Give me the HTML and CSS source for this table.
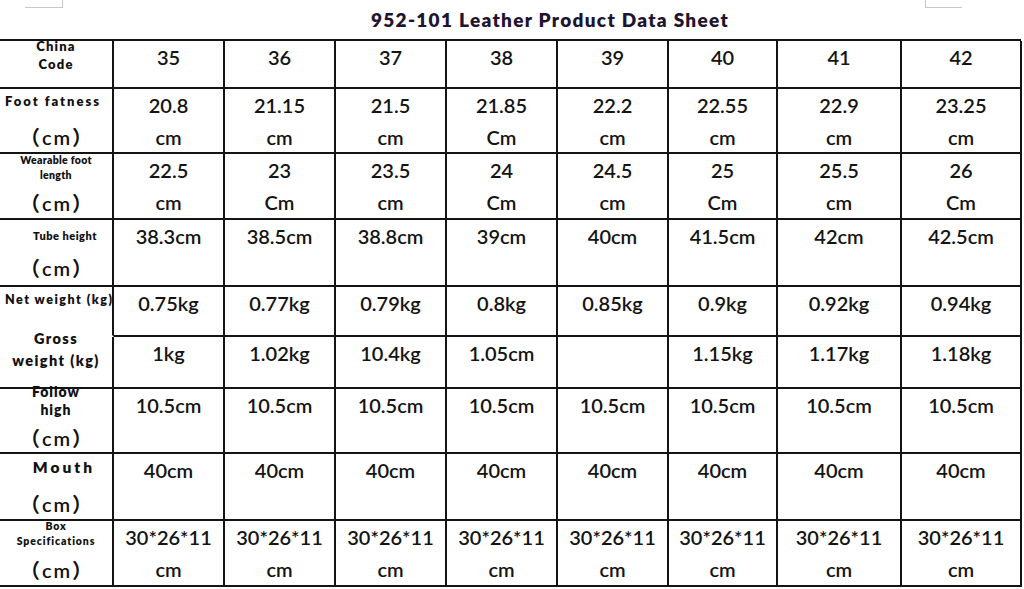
FILE: index.html
```html
<!DOCTYPE html>
<html lang="en">
<head>
<meta charset="utf-8">
<title>952-101 Leather Product Data Sheet</title>
<link rel="stylesheet" href="styles.css">
</head>
<body>
<div class="page">
  <span class="mark mark-left"></span>
  <span class="mark mark-right"></span>
  <h1 class="title">952-101 Leather Product Data Sheet</h1>
  <div class="sheet">
    <div class="c lab r1"><div class="l1">China</div><div>Code</div></div>
    <div class="c">35</div><div class="c">36</div><div class="c">37</div><div class="c">38</div><div class="c">39</div><div class="c">40</div><div class="c">41</div><div class="c">42</div>

    <div class="c lab r2"><div class="l1">Foot fatness</div><div class="cm">（cm）</div></div>
    <div class="c">20.8<br>cm</div><div class="c">21.15<br>cm</div><div class="c">21.5<br>cm</div><div class="c">21.85<br>Cm</div><div class="c">22.2<br>cm</div><div class="c">22.55<br>cm</div><div class="c">22.9<br>cm</div><div class="c">23.25<br>cm</div>

    <div class="c lab r3"><div class="l1">Wearable foot</div><div>length</div><div class="cm">（cm）</div></div>
    <div class="c">22.5<br>cm</div><div class="c">23<br>Cm</div><div class="c">23.5<br>cm</div><div class="c">24<br>Cm</div><div class="c">24.5<br>cm</div><div class="c">25<br>Cm</div><div class="c">25.5<br>cm</div><div class="c">26<br>Cm</div>

    <div class="c lab r4"><div class="l1">Tube height</div><div class="cm">（cm）</div></div>
    <div class="c">38.3cm</div><div class="c">38.5cm</div><div class="c">38.8cm</div><div class="c">39cm</div><div class="c">40cm</div><div class="c">41.5cm</div><div class="c">42cm</div><div class="c">42.5cm</div>

    <div class="c lab r5 open"><div class="l1">Net weight (kg)</div></div>
    <div class="c">0.75kg</div><div class="c">0.77kg</div><div class="c">0.79kg</div><div class="c">0.8kg</div><div class="c">0.85kg</div><div class="c">0.9kg</div><div class="c">0.92kg</div><div class="c">0.94kg</div>

    <div class="c lab r6"><div class="l1">Gross</div><div>weight (kg)</div></div>
    <div class="c">1kg</div><div class="c">1.02kg</div><div class="c">10.4kg</div><div class="c">1.05cm</div><div class="c"></div><div class="c">1.15kg</div><div class="c">1.17kg</div><div class="c">1.18kg</div>

    <div class="c lab r7"><div class="l1">Follow</div><div>high</div><div class="cm">（cm）</div></div>
    <div class="c">10.5cm</div><div class="c">10.5cm</div><div class="c">10.5cm</div><div class="c">10.5cm</div><div class="c">10.5cm</div><div class="c">10.5cm</div><div class="c">10.5cm</div><div class="c">10.5cm</div>

    <div class="c lab r8"><div class="l1">Mouth</div><div class="cm">（cm）</div></div>
    <div class="c">40cm</div><div class="c">40cm</div><div class="c">40cm</div><div class="c">40cm</div><div class="c">40cm</div><div class="c">40cm</div><div class="c">40cm</div><div class="c">40cm</div>

    <div class="c lab r9"><div class="l1">Box</div><div>Specifications</div><div class="cm">（cm）</div></div>
    <div class="c">30*26*11<br>cm</div><div class="c">30*26*11<br>cm</div><div class="c">30*26*11<br>cm</div><div class="c">30*26*11<br>cm</div><div class="c">30*26*11<br>cm</div><div class="c">30*26*11<br>cm</div><div class="c">30*26*11<br>cm</div><div class="c">30*26*11<br>cm</div>
  </div>
</div>
</body>
</html>
```

FILE: styles.css
```css
* { box-sizing: border-box; }
html, body { margin: 0; padding: 0; background: #fff; }
body {
  font-family: Lato, "Open Sans", "Noto Sans CJK SC", sans-serif;
  color: #141414;
}
.page {
  position: relative;
  width: 1024px;
  height: 589px;
  overflow: hidden;
}
.mark {
  position: absolute;
  top: 0;
  height: 8px;
  border-bottom: 1px solid #c8c8c8;
}
.mark-left { left: 25px; width: 38px; border-right: 1px solid #c8c8c8; }
.mark-right { left: 925px; width: 37px; border-left: 1px solid #c8c8c8; }

.title {
  margin: 0;
  height: 39px;
  padding: 8px 0 0 76px;
  text-align: center;
  font-size: 19px;
  line-height: 23px;
  font-weight: 800;
  letter-spacing: 1.3px;
  color: #1e1430;
}
.sheet {
  display: grid;
  grid-template-columns: 114px 111px 111px 111px 111px 111px 109px 124px 120px;
  grid-template-rows: 48px 65px 66px 67px 50px 52px 65px 67px 66px;
  width: 1021px;
  border-top: 2px solid #141414;
}
.c {
  border-right: 2px solid #141414;
  border-bottom: 2px solid #141414;
  text-align: center;
  font-size: 20px;
  font-weight: 600;
  line-height: 32px;
  white-space: nowrap;
}
.lab {
  font-weight: 800;
  color: #111;
}
.lab.open { border-bottom-color: transparent; }
.cm {
  font-family: Lato, "Noto Sans CJK SC", sans-serif;
  font-weight: 600;
  font-size: 20px;
  line-height: 32px;
  letter-spacing: 2px;
  text-indent: 2px;
}
.r1 { font-size: 13px; line-height: 18px; letter-spacing: 1.2px; }
.r1 .l1 { margin-top: -4px; }
.r2 { font-size: 13px; line-height: 20px; letter-spacing: 2px; text-align: left; padding-left: 5px; }
.r2 .l1 { margin-top: 2px; }
.r2 .cm { margin-top: 10px; text-align: center; padding-right: 5px; }
.r3 { font-size: 10.5px; line-height: 15px; letter-spacing: 0.3px; }
.r3 .l1 { margin-top: -1px; }
.r3 .cm { margin-top: 4px; }
.r4 { font-size: 11px; line-height: 20px; letter-spacing: 0.5px; padding-left: 18px; }
.r4 .l1 { margin-top: 6px; }
.r4 .cm { margin-top: 6px; margin-left: -18px; }
.r5 { font-size: 12.5px; line-height: 20px; letter-spacing: 1.5px; text-align: left; padding-left: 5px; }
.r5 .l1 { margin-top: 3px; }
.r6 { font-size: 14.5px; line-height: 22px; letter-spacing: 1.4px; }
.r6 .l1 { margin-top: -9px; }
.r7 { font-size: 14px; line-height: 18px; letter-spacing: 1px; }
.r7 .l1 { margin-top: -6px; }
.r7 .cm { margin-top: 3px; }
.r8 { font-size: 15.5px; line-height: 20px; letter-spacing: 3px; padding-left: 16px; }
.r8 .l1 { margin-top: 3px; }
.r8 .cm { margin-top: 11px; margin-left: -16px; }
.r9 { font-size: 10.5px; line-height: 15px; letter-spacing: 0.9px; }
.r9 .l1 { margin-top: -2px; }
.r9 .cm { margin-top: 5px; }
```
